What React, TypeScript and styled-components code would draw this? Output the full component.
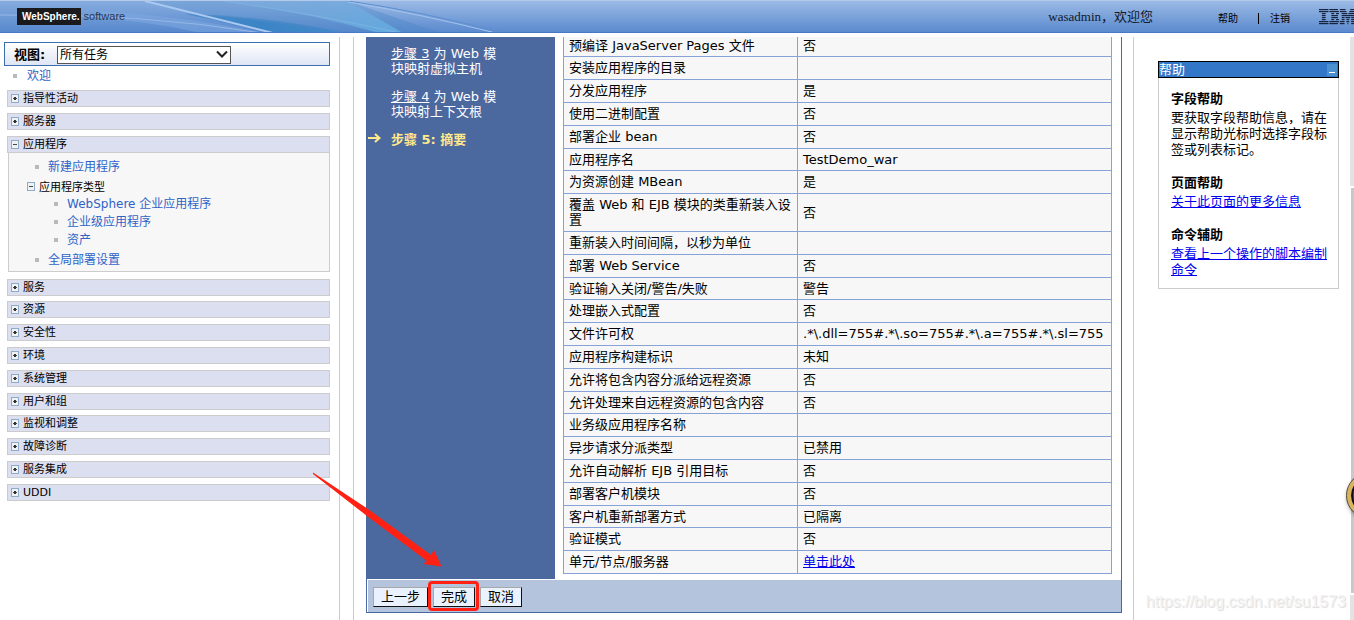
import React from 'react';
import styled, { createGlobalStyle, css } from 'styled-components';

const sans = "'DejaVu Sans', 'Noto Sans CJK SC', sans-serif";
const line = '#cccccc';

const GlobalStyle = createGlobalStyle`
  * { box-sizing: border-box; }
  html, body { margin: 0; background: #fff; }
  body { font-family: ${sans}; font-size: 13px; line-height: 15px; color: #000; overflow: hidden; }
  ul, ol, h2, p { margin: 0; padding: 0; list-style: none; font-weight: normal; }
`;

const Page = styled.div`
  position: relative;
  display: flex;
  flex-direction: column;
  min-height: 100vh;
  overflow: hidden;
`;

/* ---------- Banner ---------- */
const Banner = styled.header`
  position: relative;
  display: flex;
  align-items: center;
  height: 33px;
  padding-left: 17px;
  border-top: 1px solid #b4caea;
  border-bottom: 1px solid #4679c8;
  background: linear-gradient(#9bbae5, #5b8ace);
  overflow: hidden;
`;
const Swoosh = styled.svg`
  position: absolute;
  left: 0;
  top: 0;
`;
const Brand = styled.div`
  position: relative;
  display: flex;
  align-items: center;
  gap: 3px;
  flex: 1;
  font-family: 'Liberation Sans', sans-serif;
  font-size: 11px;
  color: #2b3850;
`;
const BrandName = styled.span`
  padding: 1px 1px 1px 5px;
  background: #1a1a1c;
  color: #fff;
  font-size: 10px;
  font-weight: bold;
`;
const Greeting = styled.span`
  margin-right: 65px;
  font-family: 'Liberation Serif', 'Noto Sans CJK SC', serif;
  color: #10182c;
`;
const BannerLinks = styled.nav`
  display: flex;
  align-items: center;
  margin-right: 29px;
  padding-top: 3px;
  font-size: 10px;
`;
const BannerLink = styled.a`
  color: #000;
  text-decoration: none;
  & + & {
    margin-left: 20px;
    padding-left: 11px;
    border-left: 1px solid #000;
    line-height: 11px;
  }
`;
const IbmMark = styled.svg`
  flex: none;
`;

const Columns = styled.div`
  display: flex;
  flex: 1;
  margin-top: 4px;
`;

/* ---------- Navigation ---------- */
const Sidebar = styled.aside`
  flex: none;
  width: 340px;
  padding: 5px 9px 0 4px;
  border-right: 1px solid ${line};
`;
const ViewBar = styled.div`
  display: flex;
  align-items: center;
  gap: 10px;
  height: 24px;
  padding-left: 9px;
  border: 1px solid #3a6eaf;
  background: linear-gradient(#ffffff, #dfe5f4);
`;
const ViewLabel = styled.label`
  width: 33px;
  font-weight: bold;
  white-space: nowrap;
`;
const SelectBox = styled.span`
  position: relative;
  display: flex;
  padding-top: 1px;
`;
const Select = styled.select`
  appearance: none;
  width: 174px;
  height: 18px;
  padding: 1px 20px 0 2px;
  border: 1px solid #555;
  border-radius: 0;
  background: #fff;
  color: #000;
  font-family: ${sans};
  font-size: 12px;
  line-height: 15px;
`;
const Chevron = styled.svg`
  position: absolute;
  right: 3px;
  top: 5px;
  pointer-events: none;
`;
const Tasks = styled.ul`
  padding-left: 3px;
`;
const Bullet = styled.li<{ $level: number }>`
  display: flex;
  align-items: center;
  gap: ${p => (p.$level === 0 ? 10 : 9)}px;
  height: 18px;
  padding-left: ${p => [6, 26, 45][p.$level]}px;
  &::before {
    content: '';
    width: 4px;
    height: 4px;
    background: #b9b9b9;
  }
`;
const TaskLink = styled.a`
  color: #2f63c8;
  font-size: 12px;
  text-decoration: none;
`;
const Welcome = styled(Bullet)`
  height: 20px;
  margin-bottom: 4px;
`;
const Group = styled.li`
  margin-bottom: 6px;
  &:nth-child(5n) { margin-bottom: 5px; }
`;
const GroupHead = styled.button`
  display: flex;
  align-items: center;
  gap: 4px;
  width: 100%;
  height: 17px;
  padding: 0 3px;
  border: 1px solid ${line};
  background: #dcdff0;
  color: #000;
  font-family: ${sans};
  font-size: 11px;
  line-height: 15px;
  text-align: left;
`;
const GroupBody = styled.ul`
  margin: -1px 0 7px 1px;
  padding: 5px 0 2px;
  border: 1px solid ${line};
  background: #f7f7f7;
`;
const SubHead = styled.button`
  display: flex;
  align-items: center;
  gap: 4px;
  height: 18px;
  margin-top: 1px;
  padding: 0 0 0 18px;
  border: 0;
  background: none;
  color: #000;
  font-family: ${sans};
  font-size: 11px;
`;
const SubList = styled.ul`
  margin-bottom: 2px;
`;

/* ---------- Wizard ---------- */
const Main = styled.main`
  flex: 1;
  min-width: 0;
  margin-left: 13px;
  padding: 0 11px 7px 12px;
  border-left: 1px solid ${line};
`;
const Wizard = styled.section`
  border: 1px solid #4a679f;
  border-top: 0;
`;
const WizardBody = styled.div`
  display: flex;
  overflow: hidden;
`;
const Steps = styled.ol`
  flex: none;
  width: 188px;
  padding-top: 9px;
  background: #4b689f;
`;
const Step = styled.li<{ $current?: boolean }>`
  position: relative;
  margin-bottom: 13px;
  padding: 0 52px 0 24px;
  color: #fff;
  white-space: nowrap;
  ${p => p.$current && css`
    color: #ffe98a;
    font-weight: bold;
  `}
`;
const StepLink = styled.a`
  color: #fff;
`;
const StepArrow = styled.svg`
  position: absolute;
  left: 1px;
  top: 0;
`;
const SummaryArea = styled.div`
  flex: 1;
  min-width: 0;
  padding: 0 9px 5px 8px;
`;
const Summary = styled.table`
  width: 100%;
  margin-top: -3px;
  border-collapse: collapse;
  table-layout: fixed;
`;
const NameCell = styled.th`
  width: 234px;
`;
const SummaryRow = styled.tr`
  th, td {
    padding: 3px 5px 4px;
    border: 1px solid #86a2d6;
    background: #f7f7f7;
    font-weight: normal;
    text-align: left;
    vertical-align: middle;
  }
  td { white-space: nowrap; }
  &:nth-child(5n + 1) th, &:nth-child(5n + 1) td { padding-bottom: 3px; }
`;
const Link = styled.a`
  color: #0000ee;
`;
const Actions = styled.div`
  display: flex;
  align-items: center;
  gap: 5px;
  height: 32px;
  margin: 1px 0 0 1px;
  padding: 2px 0 0 5px;
  background: #b4c4dd;
`;
const Button = styled.button`
  height: 20px;
  padding: 0 7px;
  border: 1px solid;
  border-color: #a8a8a8 #111 #111 #a8a8a8;
  background: #e9f2fe;
  color: #000;
  font-family: ${sans};
  font-size: 13px;
  line-height: 18px;
`;
const Marked = styled.span`
  position: relative;
  display: flex;
  &::after {
    content: '';
    position: absolute;
    inset: -6px -4px -4px -5px;
    border: 3px solid #ff2113;
    border-radius: 4px;
    pointer-events: none;
  }
`;

/* ---------- Help ---------- */
const HelpColumn = styled.aside`
  display: flex;
  flex: none;
  align-items: flex-start;
  width: 221px;
  padding: 24px 0 0 24px;
  border-left: 1px solid ${line};
`;
const HelpPortlet = styled.section`
  width: 181px;
`;
const HelpTitle = styled.h2`
  display: flex;
  align-items: center;
  justify-content: space-between;
  height: 17px;
  padding-right: 1px;
  border: 1px solid #000;
  background: #3378c8;
  color: #fff;
  font-size: 13px;
`;
const Minimize = styled.button`
  display: flex;
  align-items: flex-end;
  justify-content: center;
  width: 10px;
  height: 12px;
  padding: 0 0 3px;
  border: 0;
  background: #4c90cf;
  &::before {
    content: '';
    width: 6px;
    height: 1px;
    background: #fff;
  }
`;
const HelpBody = styled.div`
  padding: 12px 11px 10px 12px;
  border: 1px solid ${line};
  border-top: 0;
  line-height: 16px;
`;
const HelpTopic = styled.div`
  & + & { margin-top: 16px; }
`;
const HelpHeading = styled.h2`
  margin-bottom: 2px;
  font-size: 13px;
  font-weight: bold;
  line-height: 18px;
`;

/* ---------- Overlays ---------- */
const ScrollTrack = styled.div`
  position: absolute;
  top: 37px;
  right: 0;
  bottom: 0;
  display: flex;
  flex-direction: column;
  gap: 2px;
  width: 4px;
`;
const TrackEnd = styled.div<{ $size: number }>`
  height: ${p => p.$size}px;
  background: #e3e3e3;
`;
const TrackThumb = styled.div`
  flex: 1;
  margin-left: 1px;
  background: #c9c9c9;
`;
const FloatBall = styled.div`
  position: absolute;
  top: 473px;
  right: -38px;
  width: 45px;
  height: 45px;
  border: 4px solid #d9b45c;
  border-radius: 50%;
  outline: 1px solid #55482c;
  background: #4a2fa0;
  box-shadow: inset 0 0 0 2px #15101c, 0 2px 4px rgba(0, 0, 0, 0.4);
`;
const Watermark = styled.div`
  position: absolute;
  right: 8px;
  bottom: 9px;
  font-family: 'Liberation Sans', sans-serif;
  font-size: 16px;
  line-height: 18px;
  color: #f3f3f3;
  text-shadow: 1px 1px 1px #dadada;
`;
const PointerArrow = styled.svg`
  position: absolute;
  left: 312px;
  top: 472px;
  pointer-events: none;
`;

const Toggle = ({ open }: { open?: boolean }) => (
  <svg width="8" height="9" viewBox="0 0 8 9" shapeRendering="crispEdges" aria-hidden="true">
    <rect x="0" y="0" width="8" height="9" fill="#8fabc8" />
    <rect x="1" y="1" width="6" height="7" fill="#eef2f2" />
    <rect x="2" y="4" width="4" height="1" fill="#444a50" />
    {!open && <rect x="3" y="3" width="2" height="3" fill="#333" />}
  </svg>
);

/* Each stripe is a list of x, width pairs. */
const ibmRows: number[][] = [
  [0, 10, 11, 9, 22, 6, 33, 6],
  [0, 10, 11, 10, 22, 7, 32, 7],
  [3, 4, 13, 3, 18, 3, 24, 6, 31, 6],
  [3, 4, 13, 7, 24, 13],
  [3, 4, 13, 7, 24, 3, 28, 5, 34, 3],
  [3, 4, 13, 3, 18, 3, 24, 3, 29, 3, 34, 3],
  [0, 10, 11, 10, 22, 5, 29, 3, 34, 5],
  [0, 10, 11, 9, 22, 5, 30, 1, 34, 5],
];

const IbmLogo = () => (
  <IbmMark width="35" height="16" viewBox="0 0 37 16" preserveAspectRatio="none" role="img" aria-label="IBM">
    {ibmRows.map((row, y) =>
      row.map((x, i) =>
        i % 2 === 0 ? <rect key={i} x={x} y={y * 2} width={row[i + 1]} height="1.2" fill="#16243f" /> : null,
      ),
    )}
  </IbmMark>
);

const closedGroups = ['服务', '资源', '安全性', '环境', '系统管理', '用户和组', '监视和调整', '故障诊断', '服务集成', 'UDDI'];

const NavGroup = ({ name, children }: { name: string; children?: React.ReactNode }) => (
  <Group>
    <GroupHead type="button" aria-expanded={!!children}>
      <Toggle open={!!children} />
      {name}
    </GroupHead>
    {children}
  </Group>
);

const NavItem = ({ level, children }: { level: number; children: string }) => (
  <Bullet $level={level}>
    <TaskLink href="#task">{children}</TaskLink>
  </Bullet>
);

const rows: [string, React.ReactNode][] = [
  ['预编译 JavaServer Pages 文件', '否'],
  ['安装应用程序的目录', ''],
  ['分发应用程序', '是'],
  ['使用二进制配置', '否'],
  ['部署企业 bean', '否'],
  ['应用程序名', 'TestDemo_war'],
  ['为资源创建 MBean', '是'],
  ['覆盖 Web 和 EJB 模块的类重新装入设置', '否'],
  ['重新装入时间间隔，以秒为单位', ''],
  ['部署 Web Service', '否'],
  ['验证输入关闭/警告/失败', '警告'],
  ['处理嵌入式配置', '否'],
  ['文件许可权', '.*\\.dll=755#.*\\.so=755#.*\\.a=755#.*\\.sl=755'],
  ['应用程序构建标识', '未知'],
  ['允许将包含内容分派给远程资源', '否'],
  ['允许处理来自远程资源的包含内容', '否'],
  ['业务级应用程序名称', ''],
  ['异步请求分派类型', '已禁用'],
  ['允许自动解析 EJB 引用目标', '否'],
  ['部署客户机模块', '否'],
  ['客户机重新部署方式', '已隔离'],
  ['验证模式', '否'],
  ['单元/节点/服务器', <Link href="#map">单击此处</Link>],
];

export default function App() {
  return (
    <Page>
      <GlobalStyle />
      <Banner>
        <Swoosh width="520" height="32" viewBox="0 0 520 32" aria-hidden="true">
          <defs>
            <linearGradient id="deep" x1="0" x2="1">
              <stop offset="0" stopColor="#3f82c4" stopOpacity="0.1" />
              <stop offset="0.5" stopColor="#3683c4" stopOpacity="0.8" />
              <stop offset="1" stopColor="#4d96d2" stopOpacity="0.5" />
            </linearGradient>
            <linearGradient id="pale" x1="0" x2="1" y1="0" y2="1">
              <stop offset="0" stopColor="#84afe0" stopOpacity="0.4" />
              <stop offset="1" stopColor="#62aee0" stopOpacity="0.9" />
            </linearGradient>
          </defs>
          <path d="M0 0H145L273 32H0Z" fill="#4d82cb" opacity="0.25" />
          <path d="M145 0H348L440 32H273Z" fill="#4a86c8" opacity="0.4" />
          <path d="M180 12Q260 18 345 32H273Q230 20 180 12Z" fill="url(#deep)" />
          <path d="M185 13Q270 15 345 32H273Z" fill="#3a84c4" opacity="0.6" />
          <path d="M224 0H348L403 32H379Q310 12 224 0Z" fill="url(#pale)" />
          <path d="M100 10Q190 16 265 32H200Q150 20 100 18Z" fill="#7fa9e2" opacity="0.5" />
          <path d="M145 0L273 32" fill="none" stroke="#a9c9f0" strokeWidth="2" />
          <path d="M0 14Q140 12 262 32" fill="none" stroke="#96b8e8" strokeWidth="1" />
          <path d="M224 0Q320 14 400 32" fill="none" stroke="#7db2e2" strokeWidth="1" />
          <path d="M348 0Q420 10 503 32" fill="none" stroke="#5d8fd0" strokeWidth="1" />
          <path d="M348 1Q416 12 500 33" fill="none" stroke="#a4c3ee" strokeWidth="1" />
        </Swoosh>
        <Brand>
          <BrandName>WebSphere.</BrandName>
          software
        </Brand>
        <Greeting>wasadmin，欢迎您</Greeting>
        <BannerLinks>
          <BannerLink href="#help">帮助</BannerLink>
          <BannerLink href="#logout">注销</BannerLink>
        </BannerLinks>
        <IbmLogo />
      </Banner>

      <Columns>
        <Sidebar>
          <ViewBar>
            <ViewLabel htmlFor="view">视图:</ViewLabel>
            <SelectBox>
              <Select id="view">
                <option>所有任务</option>
              </Select>
              <Chevron width="12" height="9" viewBox="0 0 12 9" aria-hidden="true">
                <path d="M1 1.5L6 6.5L11 1.5" fill="none" stroke="#222" strokeWidth="2" />
              </Chevron>
            </SelectBox>
          </ViewBar>
          <Tasks>
            <Welcome $level={0}>
              <TaskLink href="#welcome">欢迎</TaskLink>
            </Welcome>
            <NavGroup name="指导性活动" />
            <NavGroup name="服务器" />
            <NavGroup name="应用程序">
              <GroupBody>
                <NavItem level={1}>新建应用程序</NavItem>
                <li>
                  <SubHead type="button" aria-expanded="true">
                    <Toggle open />
                    应用程序类型
                  </SubHead>
                  <SubList>
                    <NavItem level={2}>WebSphere 企业应用程序</NavItem>
                    <NavItem level={2}>企业级应用程序</NavItem>
                    <NavItem level={2}>资产</NavItem>
                  </SubList>
                </li>
                <NavItem level={1}>全局部署设置</NavItem>
              </GroupBody>
            </NavGroup>
            {closedGroups.map(name => (
              <NavGroup key={name} name={name} />
            ))}
          </Tasks>
        </Sidebar>

        <Main>
          <Wizard>
            <WizardBody>
              <Steps>
                <Step>
                  <StepLink href="#step3">步骤 3</StepLink> 为 Web 模<br />
                  块映射虚拟主机
                </Step>
                <Step>
                  <StepLink href="#step4">步骤 4</StepLink> 为 Web 模<br />
                  块映射上下文根
                </Step>
                <Step $current aria-current="step">
                  <StepArrow width="13" height="12" viewBox="0 0 13 12" aria-hidden="true">
                    <path d="M0 6H11M7 2L11.5 6L7 10" fill="none" stroke="#ffe98a" strokeWidth="2" />
                  </StepArrow>
                  步骤 5: 摘要
                </Step>
              </Steps>
              <SummaryArea>
                <Summary>
                  <tbody>
                    {rows.map(([name, value]) => (
                      <SummaryRow key={name}>
                        <NameCell scope="row">{name}</NameCell>
                        <td>{value}</td>
                      </SummaryRow>
                    ))}
                  </tbody>
                </Summary>
              </SummaryArea>
            </WizardBody>
            <Actions>
              <Button type="button">上一步</Button>
              <Marked>
                <Button type="button">完成</Button>
              </Marked>
              <Button type="button">取消</Button>
            </Actions>
          </Wizard>
        </Main>

        <HelpColumn>
          <HelpPortlet>
            <HelpTitle>
              帮助
              <Minimize type="button" aria-label="最小化" />
            </HelpTitle>
            <HelpBody>
              <HelpTopic>
                <HelpHeading>字段帮助</HelpHeading>
                <p>要获取字段帮助信息，请在显示帮助光标时选择字段标签或列表标记。</p>
              </HelpTopic>
              <HelpTopic>
                <HelpHeading>页面帮助</HelpHeading>
                <Link href="#more">关于此页面的更多信息</Link>
              </HelpTopic>
              <HelpTopic>
                <HelpHeading>命令辅助</HelpHeading>
                <Link href="#script">查看上一个操作的脚本编制命令</Link>
              </HelpTopic>
            </HelpBody>
          </HelpPortlet>
        </HelpColumn>
      </Columns>

      <ScrollTrack>
        <TrackEnd $size={149} />
        <TrackThumb />
        <TrackEnd $size={25} />
      </ScrollTrack>
      <FloatBall />
      <Watermark>https://blog.csdn.net/su1573</Watermark>
      <PointerArrow width="130" height="96" viewBox="0 0 130 96" aria-hidden="true">
        <path d="M1 0.5L56 37L119 83L122 78L129.500 94.500L111 92L115 89L55 44L1 2Z" fill="#ff2113" />
      </PointerArrow>
    </Page>
  );
}
